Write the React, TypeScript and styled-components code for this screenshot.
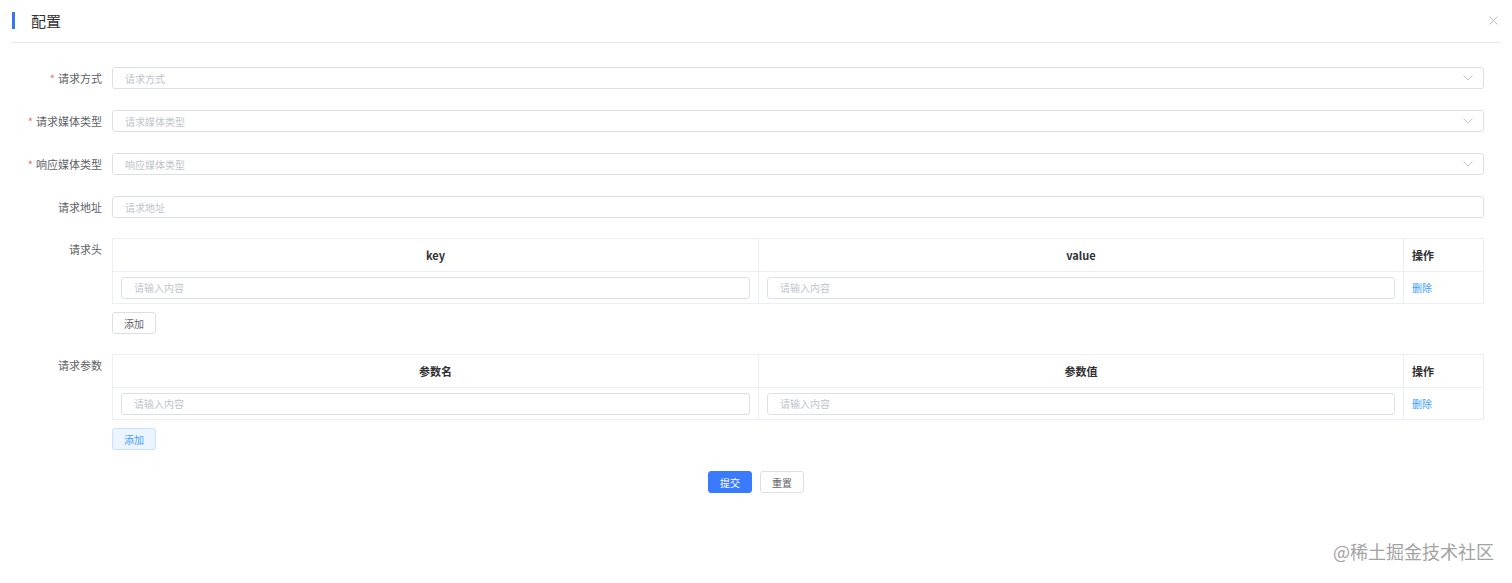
import React from "react"
import styled, { createGlobalStyle } from "styled-components"

const GlobalStyle = createGlobalStyle`
  html, body {
    margin: 0;
    padding: 0;
    background: #fff;
    font-family: "Noto Sans CJK SC", "Noto Sans", "Liberation Sans", sans-serif;
    color: #606266;
  }
  * { box-sizing: border-box; }
`

const Page = styled.div`
  position: relative;
  width: 1512px;
  height: 583px;
  padding: 0 12px;
`

const Header = styled.div`
  height: 43px;
  display: flex;
  align-items: center;
  border-bottom: 1px solid #e6e6e6;
  padding-bottom: 2px;
`

const TitleBar = styled.span`
  width: 3px;
  height: 17px;
  background: #3a75f0;
  margin-right: 16px;
`

const Title = styled.h2`
  flex: 1;
  margin: 0;
  font-size: 15px;
  font-weight: 400;
  color: #333;
`

const Close = styled.button`
  border: 0;
  background: none;
  padding: 0;
  margin-right: 2px;
  display: flex;
  color: #b8bcc4;
`

const Form = styled.form`
  padding: 24px 16px 0 0;
  display: flex;
  flex-direction: column;
`

const Item = styled.div<{ $gap?: number }>`
  display: flex;
  align-items: flex-start;
  margin-bottom: ${(p) => p.$gap ?? 21}px;
`

const Label = styled.label`
  width: 100px;
  padding-right: 10px;
  flex-shrink: 0;
  text-align: right;
  font-size: 11px;
  line-height: 22px;
  color: #606266;

  em {
    font-style: normal;
    color: #f56c6c;
    margin-right: 3px;
  }
`

const Field = styled.div`
  flex: 1;
  min-width: 0;
`

const InputBox = styled.div`
  position: relative;
  height: 22px;
  display: flex;
  align-items: center;
  border: 1px solid #dcdfe6;
  border-radius: 3px;
  padding: 0 12px;
  font-size: 10px;
  color: #c0c4cc;
  background: #fff;
`

const Arrow = styled.span`
  margin-left: auto;
  margin-right: -2px;
  display: flex;
  color: #c0c4cc;
`

const Table = styled.div`
  border: 1px solid #ebeef5;
  display: grid;
  grid-template-columns: 646px 645px 1fr;
`

const HeadCell = styled.div<{ $left?: boolean }>`
  height: 33px;
  display: flex;
  align-items: center;
  justify-content: ${(p) => (p.$left ? "flex-start" : "center")};
  padding: 0 8px;
  font-size: 11px;
  font-weight: 700;
  color: #303133;
  border-bottom: 1px solid #ebeef5;
  border-right: 1px solid #ebeef5;

  &:nth-child(3n) { border-right: 0; }
`

const BodyCell = styled.div`
  height: 31px;
  display: flex;
  align-items: center;
  padding: 0 8px;
  border-right: 1px solid #ebeef5;

  &:nth-child(3n) { border-right: 0; }

  > div { flex: 1; }
`

const LinkText = styled.a`
  font-size: 10px;
  color: #409eff;
  cursor: pointer;
`

const Button = styled.button<{ $kind?: "primary" | "plain" | "light" }>`
  height: 22px;
  padding: 0 11px;
  font-family: inherit;
  font-size: 10px;
  border-radius: 3px;
  cursor: pointer;
  border: 1px solid
    ${(p) => (p.$kind === "primary" ? "#3a7afe" : p.$kind === "light" ? "#c6e2ff" : "#dcdfe6")};
  background: ${(p) => (p.$kind === "primary" ? "#3a7afe" : p.$kind === "light" ? "#ecf5ff" : "#fff")};
  color: ${(p) => (p.$kind === "primary" ? "#fff" : p.$kind === "light" ? "#409eff" : "#606266")};
`

const AddRow = styled.div`
  display: flex;
  margin-top: 8px;
`

const Actions = styled.div`
  display: flex;
  justify-content: center;
  gap: 8px;
  padding-left: 16px;
`

const Watermark = styled.div`
  position: absolute;
  right: 18px;
  bottom: 19px;
  font-size: 18px;
  color: #a3a3a3;
  text-shadow: 0 0 1px rgba(255, 255, 255, 0.8);
`

const ChevronDown = () => (
  <svg width="10" height="6" viewBox="0 0 10 6" fill="none">
    <path d="M0.5 0.5 L5 5 L9.5 0.5" stroke="currentColor" strokeWidth="1" />
  </svg>
)

const CloseIcon = () => (
  <svg width="9" height="9" viewBox="0 0 9 9" fill="none">
    <path d="M0.5 0.5 L8.5 8.5 M8.5 0.5 L0.5 8.5" stroke="currentColor" strokeWidth="1" />
  </svg>
)

function SelectField({ placeholder }: { placeholder: string }) {
  return (
    <InputBox>
      {placeholder}
      <Arrow><ChevronDown /></Arrow>
    </InputBox>
  )
}

function KvTable({ cols, addKind }: { cols: string[]; addKind: "plain" | "light" }) {
  return (
    <Field>
      <Table>
        <HeadCell>{cols[0]}</HeadCell>
        <HeadCell>{cols[1]}</HeadCell>
        <HeadCell $left>操作</HeadCell>
        <BodyCell><InputBox>请输入内容</InputBox></BodyCell>
        <BodyCell><InputBox>请输入内容</InputBox></BodyCell>
        <BodyCell><LinkText>删除</LinkText></BodyCell>
      </Table>
      <AddRow>
        <Button type="button" $kind={addKind}>添加</Button>
      </AddRow>
    </Field>
  )
}

export default function App() {
  return (
    <>
      <GlobalStyle />
      <Page>
        <Header>
          <TitleBar />
          <Title>配置</Title>
          <Close type="button"><CloseIcon /></Close>
        </Header>
        <Form>
          <Item>
            <Label><em>*</em>请求方式</Label>
            <Field><SelectField placeholder="请求方式" /></Field>
          </Item>
          <Item>
            <Label><em>*</em>请求媒体类型</Label>
            <Field><SelectField placeholder="请求媒体类型" /></Field>
          </Item>
          <Item>
            <Label><em>*</em>响应媒体类型</Label>
            <Field><SelectField placeholder="响应媒体类型" /></Field>
          </Item>
          <Item $gap={20}>
            <Label>请求地址</Label>
            <Field><InputBox>请求地址</InputBox></Field>
          </Item>
          <Item $gap={20}>
            <Label>请求头</Label>
            <KvTable cols={["key", "value"]} addKind="plain" />
          </Item>
          <Item>
            <Label>请求参数</Label>
            <KvTable cols={["参数名", "参数值"]} addKind="light" />
          </Item>
          <Actions>
            <Button type="button" $kind="primary">提交</Button>
            <Button type="button" $kind="plain">重置</Button>
          </Actions>
        </Form>
        <Watermark>@稀土掘金技术社区</Watermark>
      </Page>
    </>
  )
}
